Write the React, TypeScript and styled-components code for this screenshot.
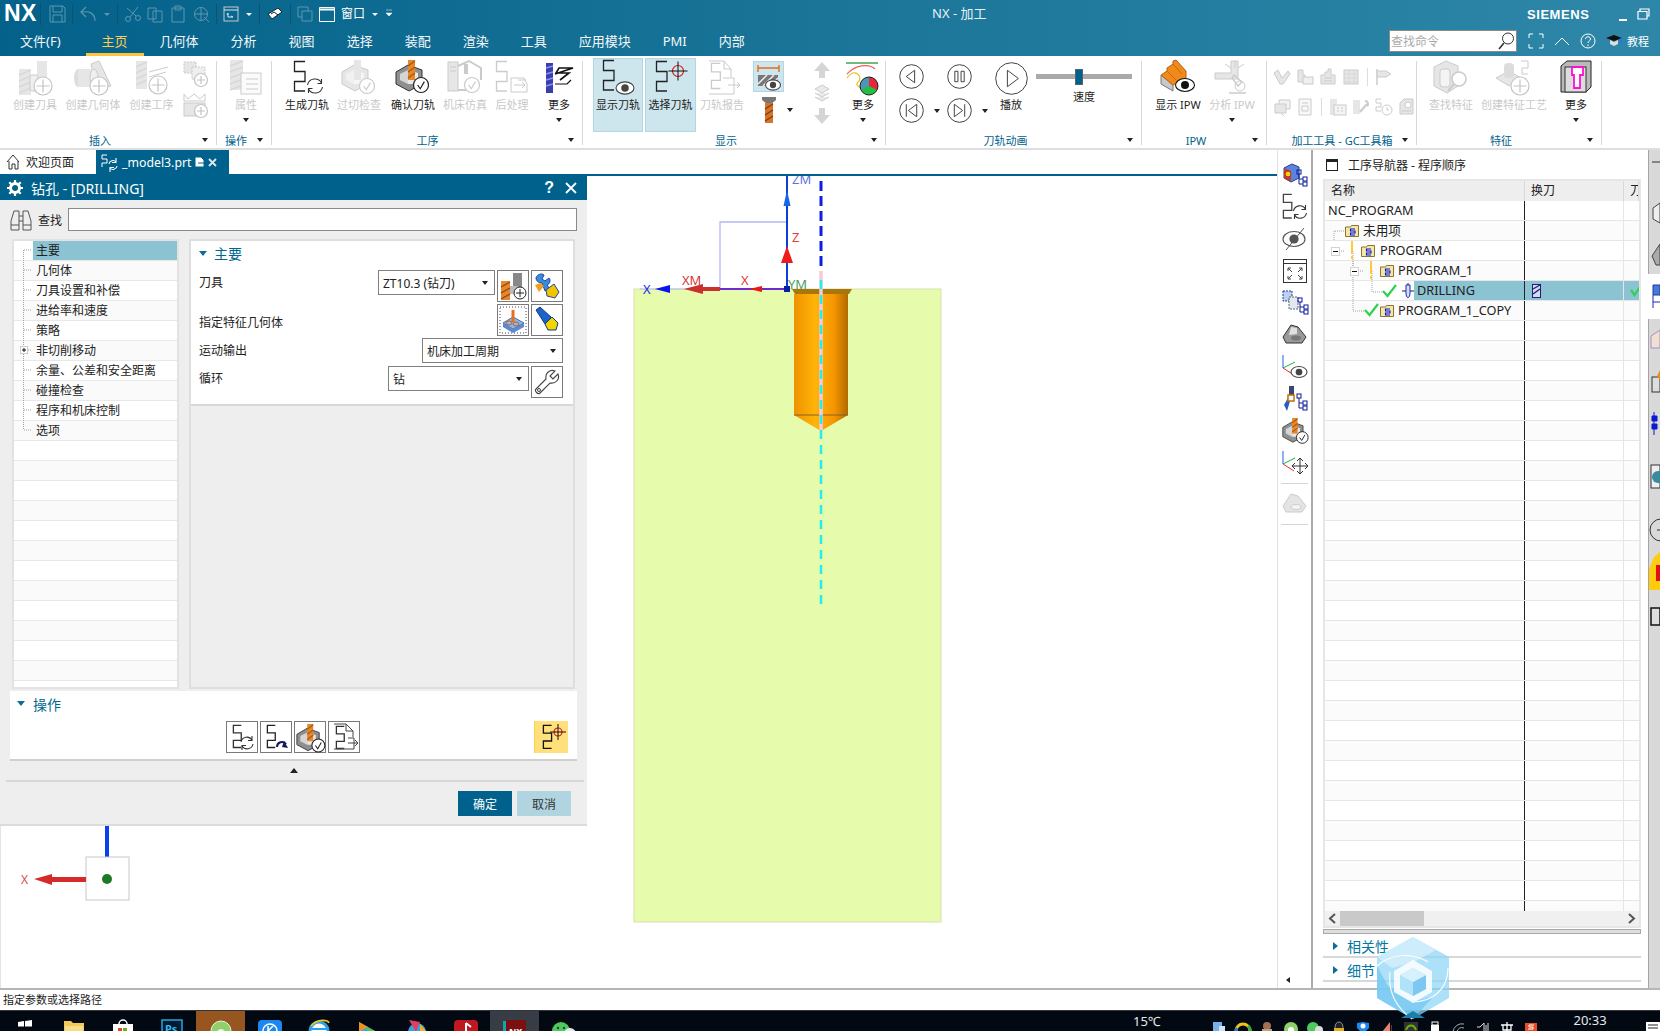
import React from "react";
import styled, { createGlobalStyle } from "styled-components";

const FONT = `"Noto Sans", "Noto Sans CJK SC", sans-serif`;
const BLUE = "#00628c";
const DG = "#cbcbcb";
const DF = "#e6e6e6";

const Global = createGlobalStyle`
  html, body { margin: 0; padding: 0; background: #fff; }
  body { font-family: ${FONT}; font-size: 12px; color: #222; }
  * { box-sizing: border-box; }
`;

const Root = styled.div`
  position: relative;
  width: 1660px;
  height: 1031px;
  overflow: hidden;
  background: #fff;
  display: flex;
  flex-direction: column;
`;

/* ---------- title bar ---------- */
const TitleBar = styled.header`
  height: 56px;
  flex: none;
  background: linear-gradient(90deg, #03618a 0%, #1a7598 50%, #2e87a9 100%);
  color: #fff;
  display: flex;
  flex-direction: column;
`;
const TopRow = styled.div`
  height: 27px;
  display: flex;
  align-items: center;
`;
const Logo = styled.div`
  width: 41px;
  padding-left: 4px;
  font: bold 23px/27px "Liberation Sans", sans-serif;
  letter-spacing: 0.5px;
  border-right: 1px solid #0c4f6e;
  height: 22px;
  display: flex;
  align-items: center;
`;
const Quick = styled.div`
  width: 891px;
  display: flex;
  align-items: center;
  padding-left: 8px;
  gap: 6px;
`;
const QuickSep = styled.span`
  width: 1px;
  height: 20px;
  background: #0d5272;
`;
const QuickText = styled.span`
  font-size: 12px;
  color: #fff;
  margin-top: -2px;
`;
const DocTitle = styled.div`
  font-size: 13px;
  color: #e8f2f6;
  margin-top: -3px;
`;
const Brand = styled.div`
  margin-left: auto;
  font: bold 13px "Liberation Sans", sans-serif;
  letter-spacing: 0.55px;
  width: 91px;
  margin-top: 2px;
`;
const WinBtns = styled.div`
  width: 42px;
  display: flex;
  gap: 9px;
  align-items: center;
`;
const MenuRow = styled.nav`
  height: 29px;
  display: flex;
  align-items: flex-start;
  padding-left: 4px;
`;
const MenuItem = styled.div<{ $active?: boolean; $gap?: number }>`
  padding: 5px 16px 0;
  height: 29px;
  font-size: 13px;
  line-height: 18px;
  margin-right: ${(p) => p.$gap ?? 0}px;
  color: ${(p) => (p.$active ? "#ffcb52" : "#f4f8fa")};
  border-bottom: 3px solid ${(p) => (p.$active ? "#ffc43d" : "transparent")};
`;
const SearchBox = styled.div`
  margin-left: auto;
  margin-top: 3px;
  width: 128px;
  height: 22px;
  background: #fff;
  border: 1px solid #8a8a8a;
  color: #aaa;
  font-size: 12px;
  display: flex;
  align-items: center;
  justify-content: space-between;
  padding: 0 1px 0 1px;
`;
const MenuTools = styled.div`
  width: 143px;
  display: flex;
  align-items: center;
  height: 22px;
  margin-top: 3px;
  padding-left: 11px;
  gap: 10px;
  font-size: 11px;
`;

/* ---------- ribbon ---------- */
const Ribbon = styled.section`
  height: 94px;
  flex: none;
  display: flex;
  background: #fff;
  border-bottom: 2px solid #dedede;
`;
const Group = styled.div<{ $w: number }>`
  width: ${(p) => p.$w}px;
  flex: none;
  height: 92px;
  display: flex;
  flex-direction: column;
  position: relative;
  &::after {
    content: "";
    position: absolute;
    right: 0;
    top: 5px;
    bottom: 3px;
    width: 1px;
    background: #d8d8d8;
  }
`;
const GroupBody = styled.div<{ $pad?: number }>`
  height: 76px;
  display: flex;
  padding-left: ${(p) => p.$pad ?? 0}px;
`;
const GroupFooter = styled.div<{ $shift: number }>`
  height: 16px;
  display: flex;
  align-items: center;
  justify-content: center;
  position: relative;
  color: ${BLUE};
  font-size: 11px;
  line-height: 14px;
  padding: 1px ${(p) => p.$shift}px 0 0;
`;
const FooterCaret = styled.i`
  position: absolute;
  right: 9px;
  top: 6px;
  border: 3.5px solid transparent;
  border-top: 4px solid #222;
  border-bottom: 0;
`;
const Tool = styled.div<{ $w: number; $on?: boolean; $off?: boolean }>`
  width: ${(p) => p.$w}px;
  flex: none;
  display: flex;
  flex-direction: column;
  align-items: center;
  padding-top: ${(p) => (p.$on ? 1 : 4)}px;
  margin-top: ${(p) => (p.$on ? 2 : 0)}px;
  height: ${(p) => (p.$on ? 74 : 76)}px;
  background: ${(p) => (p.$on ? "#cde5ec" : "transparent")};
  border: ${(p) => (p.$on ? "1px solid #b3d7e2" : "none")};
  color: ${(p) => (p.$off ? "#c9c9c9" : "#222")};
  font-size: 11px;
  line-height: 14px;
  white-space: nowrap;
`;
const ToolIcon = styled.div`
  height: 36px;
  display: flex;
  align-items: center;
  justify-content: center;
  margin-bottom: 2px;
`;
const Caret = styled.i<{ $mt?: number }>`
  display: block;
  border: 3.5px solid transparent;
  border-top: 4px solid #222;
  border-bottom: 0;
  margin-top: ${(p) => p.$mt ?? 6}px;
`;
const IconCol = styled.div<{ $w: number }>`
  width: ${(p) => p.$w}px;
  flex: none;
  display: flex;
  flex-direction: column;
  align-items: center;
  gap: 5px;
  padding-top: 5px;
`;
const SmallRow = styled.div<{ $left?: number; $gap?: number }>`
  display: flex;
  align-items: center;
  gap: ${(p) => p.$gap ?? 5}px;
  margin-left: ${(p) => p.$left ?? 0}px;
`;
const SelectedMini = styled.div`
  width: 31px;
  height: 31px;
  background: #cde5ec;
  border: 1px solid #b3d7e2;
  display: flex;
  align-items: center;
  justify-content: center;
`;
const CircleCol = styled.div<{ $w: number }>`
  width: ${(p) => p.$w}px;
  flex: none;
  padding: 8px 0 0 13px;
  display: flex;
  flex-direction: column;
  gap: 9px;
`;
const CircleWrap = styled.div`
  display: flex;
  align-items: center;
  gap: 10px;
`;
const SliderBox = styled.div`
  width: 96px;
  margin-left: 4px;
  flex: none;
  display: flex;
  flex-direction: column;
  align-items: center;
  padding-top: 13px;
  font-size: 11px;
`;
const SliderTrack = styled.div`
  width: 96px;
  height: 5px;
  background: #aaaaaa;
  margin-top: 5px;
  display: flex;
  justify-content: center;
`;
const SliderThumb = styled.div`
  width: 8px;
  height: 16px;
  margin-top: -5.5px;
  margin-left: -10px;
  flex: none;
  background: ${BLUE};
  border: 1px solid #55636b;
`;
const SliderLabel = styled.span`
  margin-top: 11px;
  line-height: 14px;
`;
const ToolsGrid = styled.div`
  display: flex;
  flex-direction: column;
  gap: 12px;
  padding: 12px 0 0 6px;
`;
const GridRow = styled.div`
  display: flex;
  align-items: center;
  gap: 4px;
`;
const ThinSep = styled.span`
  width: 1px;
  height: 18px;
  background: #ddd;
  margin: 0 2px;
`;

/* ---------- main ---------- */
const Main = styled.main`
  height: 838px;
  flex: none;
  display: flex;
`;
const LeftArea = styled.div`
  width: 1277px;
  flex: none;
  display: flex;
  flex-direction: column;
`;
const TabRow = styled.div`
  height: 24px;
  flex: none;
  display: flex;
  background: #fff;
`;
const HomeTab = styled.div`
  width: 96px;
  display: flex;
  align-items: center;
  padding-left: 6px;
  gap: 6px;
  font-size: 12px;
`;
const ActiveTab = styled.div`
  width: 133px;
  background: ${BLUE};
  color: #fff;
  display: flex;
  align-items: center;
  padding-left: 5px;
  gap: 3px;
  font-size: 12.3px;
`;
const Work = styled.div`
  height: 814px;
  display: flex;
`;
const DialogCol = styled.div`
  width: 587px;
  flex: none;
  display: flex;
  flex-direction: column;
  border-left: 1px solid #e4e4e4;
`;
const Dialog = styled.div`
  height: 652px;
  margin-left: -1px;
  flex: none;
  display: flex;
  flex-direction: column;
  background: #eeeeee;
  border-bottom: 2px solid #dcdcdc;
`;
const DialogTitle = styled.div`
  height: 26px;
  flex: none;
  background: ${BLUE};
  color: #fff;
  display: flex;
  align-items: center;
  padding: 1px 10px 0 7px;
  font-size: 14px;
  gap: 8px;
`;
const TitleActions = styled.div`
  margin-left: auto;
  display: flex;
  align-items: center;
  gap: 11px;
  font: bold 16px "Liberation Sans", sans-serif;
`;
const FindRow = styled.div`
  height: 23px;
  margin-top: 8px;
  display: flex;
  align-items: center;
  padding: 0 10px;
  font-size: 12px;
  flex: none;
`;
const FindLabel = styled.span`
  margin: 0 6px 0 6px;
  white-space: nowrap;
  flex: none;
`;
const FindInput = styled.div`
  width: 509px;
  height: 23px;
  flex: none;
  background: #fff;
  border: 1px solid #8a8a8a;
`;
const Columns = styled.div`
  display: flex;
  height: 450px;
  margin-top: 8px;
  padding-left: 12px;
  gap: 10px;
  flex: none;
`;
const TreePanel = styled.div`
  position: relative;
  width: 167px;
  flex: none;
  background: #fff;
  border: 2px solid #e2e2e2;
  overflow: hidden;
`;
const TreeRow = styled.div<{ $alt: boolean }>`
  height: 20px;
  border-bottom: 1px solid #e8e8e8;
  background: ${(p) => (p.$alt ? "#fafafa" : "#fff")};
  padding-left: 19px;
  line-height: 19px;
  font-size: 12px;
  color: #222;
  position: relative;
`;
const TreeLabel = styled.span<{ $sel?: boolean }>`
  display: block;
  height: 19px;
  padding-left: 3px;
  background: ${(p) => (p.$sel ? "#8bc3d3" : "transparent")};
`;
const TreeLines = styled.svg`
  position: absolute;
  left: 0;
  top: 0;
`;
const FormPanel = styled.div`
  width: 386px;
  flex: none;
  border: 2px solid #dedede;
  background: #eeeeee;
`;
const FormSection = styled.div`
  height: 165px;
  background: #fff;
  border-bottom: 2px solid #d8d8d8;
  padding: 0 10px 0 6px;
`;
const SectionHead = styled.div`
  height: 29px;
  display: flex;
  align-items: center;
  gap: 7px;
  color: #00688f;
  font-size: 14px;
  padding: 0 0 5px 2px;
`;
const DownTri = styled.i`
  border: 4.5px solid transparent;
  border-top: 5px solid #0c6e96;
  border-bottom: 0;
`;
const FormRow = styled.div`
  display: flex;
  align-items: flex-start;
  margin-bottom: 2px;
  min-height: 25px;
`;
const FieldLabel = styled.span<{ $drop?: number }>`
  line-height: 26px;
  margin-top: ${(p) => p.$drop ?? 0}px;
  font-size: 12px;
  padding-left: 2px;
`;
const Controls = styled.div`
  margin-left: auto;
  display: flex;
  gap: 2px;
`;
const Combo = styled.div<{ $w: number }>`
  width: ${(p) => p.$w}px;
  height: 25px;
  background: #fff;
  border: 1px solid #808080;
  display: flex;
  align-items: center;
  justify-content: space-between;
  padding: 0 6px 0 4px;
  font-size: 12px;
`;
const ComboCaret = styled.i`
  border: 3.5px solid transparent;
  border-top: 4px solid #222;
  border-bottom: 0;
`;
const IconBtn = styled.div`
  width: 32px;
  height: 32px;
  flex: none;
  background: #fff;
  border: 1px solid #7a7a7a;
  display: flex;
  align-items: center;
  justify-content: center;
`;
const OpsPanel = styled.div`
  height: 70px;
  margin: 2px 10px 0 10px;
  flex: none;
  background: #fff;
  border-bottom: 2px solid #cfcfcf;
`;
const OpsHead = styled.div`
  height: 30px;
  display: flex;
  align-items: center;
  gap: 8px;
  padding: 0 0 5px 7px;
  color: #00688f;
  font-size: 14px;
`;
const OpsButtons = styled.div`
  display: flex;
  gap: 2px;
  padding-left: 216px;
  padding-right: 9px;
`;
const YellowBtn = styled.div`
  margin-left: auto;
  width: 34px;
  height: 32px;
  background: #ffe07a;
  border-left: 1px solid #ffd040;
  display: flex;
  align-items: center;
  justify-content: center;
`;
const CollapseBar = styled.div`
  height: 21px;
  margin: 0 3px 0 6px;
  display: flex;
  justify-content: center;
  align-items: center;
  border-bottom: 2px solid #d8d8d8;
`;
const UpTri = styled.i`
  border: 4.5px solid transparent;
  border-bottom: 5px solid #222;
  border-top: 0;
  margin-left: -3px;
`;
const DialogFooter = styled.div`
  display: flex;
  justify-content: flex-end;
  gap: 5px;
  padding: 9px 16px 0 0;
`;
const DlgButton = styled.div<{ $primary?: boolean }>`
  width: 54px;
  height: 25px;
  display: flex;
  align-items: center;
  justify-content: center;
  font-size: 12px;
  background: ${(p) => (p.$primary ? BLUE : "#b0d5e0")};
  color: ${(p) => (p.$primary ? "#fff" : "#333")};
`;
const TriadBox = styled.svg`
  display: block;
  font-family: "Noto Sans", sans-serif;
`;
const Viewport = styled.svg`
  flex: 1;
  display: block;
  height: 814px;
  border-top: 2px solid ${BLUE};
  background: #fff;
  font-family: "Noto Sans", sans-serif;
`;

/* ---------- side columns ---------- */
const ToolColumn = styled.aside`
  width: 36px;
  flex: none;
  display: flex;
  flex-direction: column;
  align-items: center;
  padding-top: 9px;
  border-left: 1px solid #e2e2e2;
  border-right: 2px solid #ababab;
`;
const ColItem = styled.div`
  width: 32px;
  height: 32px;
  flex: none;
  display: flex;
  align-items: center;
  justify-content: center;
`;
const ColSep = styled.hr`
  width: 27px;
  height: 1px;
  margin: 4px 0;
  flex: none;
  border: 0;
  background: #d5d5d5;
`;
const ColCaret = styled.i`
  margin-top: auto;
  margin-bottom: 5px;
  margin-right: 14px;
  border: 3.5px solid transparent;
  border-right: 4px solid #222;
  border-left: 0;
`;
const Navigator = styled.section`
  width: 335px;
  flex: none;
  display: flex;
  flex-direction: column;
  padding-left: 10px;
  padding-right: 7px;
`;
const NavHead = styled.div`
  height: 29px;
  display: flex;
  align-items: center;
  gap: 10px;
  padding-left: 3px;
  font-size: 12px;
  padding-top: 1px;
`;
const NavWinIcon = styled.i`
  width: 12px;
  height: 12px;
  border: 1px solid #222;
  border-top-width: 3px;
`;
const TableBox = styled.div`
  height: 749px;
  flex: none;
  border: 2px solid #e6e6e6;
  display: flex;
  flex-direction: column;
`;
const HeaderRow = styled.div`
  height: 20px;
  flex: none;
  display: grid;
  grid-template-columns: 200px 99px 1fr;
  background: #eeeeee;
  line-height: 20px;
  overflow: hidden;
`;
const HeaderCell = styled.div`
  padding-left: 6px;
  border-right: 1px solid #d8d8d8;
  white-space: nowrap;
  overflow: hidden;
`;
const Rows = styled.div`
  height: 710px;
  flex: none;
  overflow: hidden;
`;
const NavRow = styled.div<{ $alt: boolean }>`
  height: 20px;
  display: grid;
  grid-template-columns: 200px 99px 1fr;
  border-bottom: 1px solid #e6e6e6;
  background: ${(p) => (p.$alt ? "#fbfbfb" : "#fff")};
`;
const NameCell = styled.div`
  border-right: 1px solid #222;
  display: flex;
  align-items: stretch;
  line-height: 19px;
  white-space: nowrap;
  font-size: 12.7px;
`;
const NameText = styled.span<{ $sel?: boolean }>`
  flex: ${(p) => (p.$sel ? 1 : "none")};
  padding-left: 3px;
  background: ${(p) => (p.$sel ? "#8bc3d3" : "transparent")};
`;
const DataCell = styled.div<{ $sel?: boolean; $line?: boolean }>`
  background: ${(p) => (p.$sel ? "#8bc3d3" : "transparent")};
  border-right: ${(p) => (p.$line ? "1px solid #e6e6e6" : "0")};
  display: flex;
  align-items: center;
  padding-left: 7px;
  overflow: hidden;
`;
const Glyphs = styled.svg`
  flex: none;
  overflow: visible;
  display: block;
`;
const ScrollBar = styled.div`
  height: 15px;
  flex: none;
  background: #f0f0f0;
  display: flex;
  align-items: center;
  justify-content: space-between;
  padding: 0 3px;
`;
const ScrollThumb = styled.div`
  width: 84px;
  height: 15px;
  background: #c9c9c9;
  margin-left: 3px;
  margin-right: auto;
`;
const NavSplit = styled.div`
  height: 5px;
  margin-top: 1px;
  flex: none;
  background: #dedede;
  border: 1px solid #a8a8a8;
`;
const FoldRow = styled.div`
  height: 24px;
  flex: none;
  display: flex;
  align-items: center;
  gap: 9px;
  padding-left: 10px;
  color: #00789f;
  font-size: 14px;
  border-bottom: 2px solid #d8d8d8;
  padding-top: 2px;
`;
const RightTri = styled.i`
  border: 4.5px solid transparent;
  border-left: 5px solid #0c6e96;
  border-right: 0;
`;
const Rail = styled.aside`
  width: 12px;
  flex: none;
  display: flex;
  flex-direction: column;
  overflow: hidden;
`;
const RailGroup = styled.svg<{ $h: number; $grey: boolean }>`
  display: block;
  flex: none;
  height: ${(p) => p.$h}px;
  width: 12px;
  background: ${(p) => (p.$grey ? "#d9d9d9" : "#fff")};
`;

/* ---------- bottom ---------- */
const StatusBar = styled.footer`
  height: 22px;
  flex: none;
  border-top: 2px solid #b5b5b5;
  padding-left: 3px;
  font-size: 11px;
  line-height: 20px;
  background: #fff;
  color: #222;
`;
const Taskbar = styled.div`
  height: 21px;
  flex: none;
  background: #020913;
  border-top: 1px solid #33373d;
  display: flex;
  overflow: hidden;
  color: #e8e8e8;
`;
const TaskItem = styled.div<{ $bg?: string }>`
  width: 49px;
  flex: none;
  background: ${(p) => p.$bg ?? "transparent"};
  display: flex;
  justify-content: center;
  padding-top: 9px;
`;
const Temp = styled.div`
  margin-left: 545px;
  width: 74px;
  padding-top: 2px;
  font-size: 13px;
  line-height: 16px;
`;
const TrayIcon = styled.div`
  width: 24px;
  flex: none;
  padding-top: 11px;
  display: flex;
  justify-content: center;
`;
const Clock = styled.div`
  margin-left: 31px;
  width: 73px;
  padding-top: 1px;
  font-size: 13px;
  line-height: 16px;
`;
const NotifyIcon = styled.div`
  padding-top: 11px;
`;
const Watermark = styled.svg`
  position: absolute;
  left: 1376px;
  top: 936px;
  pointer-events: none;
`;

/* ---------- icon parts ---------- */
type SvgP = { w?: number; h?: number; children?: React.ReactNode };
const Ic = styled.svg`
  display: block;
  overflow: visible;
  flex: none;
`;
const S = ({ w = 36, h = 36, children }: SvgP) => (
  <Ic width={w} height={h} viewBox={`0 0 ${w} ${h}`}>
    {children}
  </Ic>
);
const Path5 = ({ x = 0, y = 0, k = 1, c = "#222", sw = 1.3 }: { x?: number; y?: number; k?: number; c?: string; sw?: number }) => (
  <path
    transform={`translate(${x} ${y}) scale(${k})`}
    d="M11 .5H.5V10.5H11V20.5H.5V30H11"
    fill="none"
    stroke={c}
    strokeWidth={sw / k}
  />
);
const Refresh = ({ cx, cy, r = 7, c = "#333" }: { cx: number; cy: number; r?: number; c?: string }) => (
  <g fill="none" stroke={c} strokeWidth="1.1">
    <path d={`M${cx - r} ${cy - 1}A${r} ${r} 0 0 1 ${cx + r - 1} ${cy - 3}`} />
    <path d={`M${cx + r} ${cy + 1}A${r} ${r} 0 0 1 ${cx - r + 1} ${cy + 3}`} />
    <path d={`M${cx + r - 1} ${cy - 7}V${cy - 2.5}H${cx + r - 5}M${cx - r + 1} ${cy + 7}V${cy + 2.5}H${cx - r + 5}`} />
  </g>
);
const Eye = ({ cx, cy, rx = 9, c = "#444" }: { cx: number; cy: number; rx?: number; c?: string }) => (
  <g>
    <ellipse cx={cx} cy={cy} rx={rx} ry={rx * 0.68} fill="#fff" stroke={c} strokeWidth="1.1" />
    <circle cx={cx} cy={cy} r={rx * 0.42} fill={c} />
  </g>
);
const Plus = ({ cx, cy, r = 8 }: { cx: number; cy: number; r?: number }) => (
  <g>
    <circle cx={cx} cy={cy} r={r} fill="#fff" stroke="#c4c4c4" strokeWidth="1.2" />
    <path d={`M${cx - r + 2.5} ${cy}H${cx + r - 2.5}M${cx} ${cy - r + 2.5}V${cy + r - 2.5}`} stroke="#c4c4c4" strokeWidth="1.2" />
  </g>
);
const Check = ({ cx, cy, r = 7, c = "#333" }: { cx: number; cy: number; r?: number; c?: string }) => (
  <g>
    <circle cx={cx} cy={cy} r={r} fill="#fff" stroke={c} strokeWidth="1.2" />
    <path d={`M${cx - r * 0.45} ${cy}l${r * 0.35} ${r * 0.5}l${r * 0.55} -${r * 0.95}`} fill="none" stroke={c} strokeWidth="1.2" />
  </g>
);
const Stripe = ({ x, y, w, h, f = DF, l = "#d8d8d8" }: { x: number; y: number; w: number; h: number; f?: string; l?: string }) => (
  <g>
    <rect x={x} y={y} width={w} height={h} fill={f} />
    <path
      d={Array.from({ length: Math.floor(h / 6) })
        .map((_, i) => `M${x} ${y + 6 + i * 6}L${x + w} ${y + 1 + i * 6}`)
        .join("")}
      stroke={l}
      strokeWidth="1.4"
    />
  </g>
);
const Block3D = ({ gray = false }: { gray?: boolean }) => (
  <g>
    <path d="M1 12L13 5L27 10V24L14 31L1 24Z" fill={gray ? DF : "#8f8f8f"} stroke={gray ? DG : "#333"} />
    <path d="M5 14L13 10V24L5 20Z" fill={gray ? "#f1f1f1" : "#d5d5d5"} />
    <path d="M13 10L23 13V24L13 24Z" fill={gray ? "#f5f5f5" : "#e8e8e8"} />
  </g>
);
const ConfirmIcon = ({ k = 1 }: { k?: number }) => (
  <g transform={`scale(${k})`}>
    <Block3D />
    <Stripe x={13} y={0} w={7} h={20} f="#e8862a" l="#a65a12" />
    <Check cx={26} cy={25} r={7.5} c="#222" />
  </g>
);
const FolderG = ({ x, y }: { x: number; y: number }) => (
  <g transform={`translate(${x} ${y})`}>
    <path d="M.5 3V12.5H13.5V1.5H6.5L5.5 3Z" fill="#f7e6a4" stroke="#8a7434" />
    <path d="M10 5H5.5V7H10V9H5.5V11H10" fill="none" stroke="#0014e0" strokeWidth="1.1" />
  </g>
);
const Tick = ({ x, y }: { x: number; y: number }) => (
  <path transform={`translate(${x} ${y})`} d="M0 6L4.5 11L13 0" fill="none" stroke="#2fd24e" strokeWidth="2.2" />
);
const Dots = ({ d }: { d: string }) => <path d={d} fill="none" stroke="#a2a2a2" strokeDasharray="1 1" />;
const MinusBox = ({ x, y }: { x: number; y: number }) => (
  <g transform={`translate(${x} ${y})`}>
    <rect x=".5" y=".5" width="8" height="8" fill="#fff" stroke="#d2d2d2" />
    <path d="M2 4.5H7" stroke="#111" />
  </g>
);
const Excl = ({ x }: { x: number }) => (
  <path d={`M${x} 0V13M${x} 15V18`} stroke="#ffc93c" strokeWidth="2" />
);

/* ribbon icons */
const CreateTool = () => (
  <S>
    <Stripe x={2} y={9} w={12} h={26} />
    <rect x="20" y="1" width="10" height="21" fill={DF} />
    <rect x="13" y="15" width="8" height="16" rx="2" fill="#efefef" stroke={DG} />
    <Plus cx={26} cy={26} r={9} />
  </S>
);
const CreateGeom = () => (
  <S w={40}>
    <path d="M18 4L26 1L38 26L24 30Z" fill={DF} stroke={DG} />
    <ellipse cx="5" cy="18" rx="4" ry="9" fill="#ddd" />
    <rect x="5" y="9" width="16" height="18" fill={DF} />
    <ellipse cx="21" cy="18" rx="4" ry="9" fill="#efefef" stroke={DG} />
    <Plus cx={26} cy={26} r={9} />
  </S>
);
const CreateOp = () => (
  <S>
    <Stripe x={2} y={1} w={11} h={28} />
    <path d="M15 12L34 7M15 17L32 12M15 22L30 20" stroke={DG} fill="none" />
    <Plus cx={24} cy={25} r={9} />
  </S>
);
const SmallPaper = () => (
  <S w={24} h={26}>
    <rect x="1" y="1" width="12" height="11" fill={DF} stroke={DG} strokeDasharray="2 1" />
    <rect x="9" y="6" width="13" height="12" fill="#efefef" stroke={DG} strokeDasharray="2 1" />
    <Plus cx={18} cy={19} r={6.5} />
  </S>
);
const SmallCrown = () => (
  <S w={24} h={26}>
    <path d="M1 2L5 7L11 2L17 7L22 2V9H1Z" fill="none" stroke={DG} />
    <rect x="1" y="11" width="21" height="13" fill={DF} stroke={DG} />
    <Plus cx={18} cy={19} r={6.5} />
  </S>
);
const PropsIcon = () => (
  <S>
    <Stripe x={2} y={0} w={13} h={30} />
    <rect x="13" y="13" width="20" height="21" fill="#fbfbfb" stroke={DG} />
    <path d="M18 19H30M18 24H30M18 29H30" stroke={DG} />
  </S>
);
const GenPath = () => (
  <S>
    <Path5 x={5} y={1} k={1} c="#222" />
    <Refresh cx={26} cy={26} r={7.5} />
  </S>
);
const Overcut = () => (
  <S>
    <Block3D gray />
    <rect x="13" y="0" width="7" height="20" fill={DF} />
    <Check cx={26} cy={26} r={7.5} c={DG} />
  </S>
);
const MachineSim = () => (
  <S>
    <rect x="1" y="2" width="10" height="29" fill={DF} stroke={DG} />
    <path d="M3 7H9M3 11H9" stroke={DG} />
    <path d="M11 6L22 1L34 8V20" fill="none" stroke={DG} strokeWidth="2" />
    <rect x="17" y="4" width="4" height="10" fill={DG} />
    <path d="M11 30H30" stroke={DG} strokeWidth="2" />
    <Check cx={25} cy={25} r={7.5} c={DG} />
  </S>
);
const PostProc = () => (
  <S>
    <Path5 x={2} y={1} c={DG} />
    <path d="M17 18H30L33 24V32H17ZM24 20H32" fill="none" stroke={DG} />
    <path d="M20 25H31M28 22L31 25L28 28" fill="none" stroke={DG} />
  </S>
);
const MoreOp = () => (
  <S>
    <rect x="5" y="3" width="7" height="30" fill="#3a3fb0" />
    <path d="M5 8L12 6M5 14L12 12M5 20L12 18M5 26L12 24" stroke="#8a90ee" strokeWidth="1.5" />
    <path d="M14 14L32 8H18L15 13H28L19 20" fill="none" stroke="#111" strokeWidth="1.6" />
    <path d="M14 24H26L30 20" fill="none" stroke="#111" strokeWidth="1.2" />
  </S>
);
const ShowPath = () => (
  <S>
    <Path5 x={3} y={0} />
    <Eye cx={25} cy={28} rx={9} />
  </S>
);
const Target = ({ cx, cy, r = 5 }: { cx: number; cy: number; r?: number }) => (
  <g>
    <circle cx={cx} cy={cy} r={r} fill="none" stroke="#d81a1a" strokeWidth="1.2" />
    <path d={`M${cx - r - 4} ${cy}H${cx + r + 4}M${cx} ${cy - r - 4}V${cy + r + 4}`} stroke="#111" />
  </g>
);
const SelectPath = () => (
  <S>
    <Path5 x={3} y={1} />
    <Target cx={25} cy={11} r={5.5} />
  </S>
);
const PathReport = () => (
  <S>
    <path d="M5 1H20L27 9V17" fill="none" stroke={DG} />
    <path d="M27 9H20V1" fill="none" stroke={DG} />
    <Path5 x={7} y={3} k={0.85} c={DG} />
    <path d="M19 18H30V34H5M24 25H36M33 22L36 25L33 28" fill="none" stroke={DG} />
  </S>
);
const ShowCut = () => (
  <S w={29} h={29}>
    <rect x="4" y="13" width="20" height="11" fill="#777" />
    <path d="M4 22L13 13M9 24L20 13M16 24L24 16" stroke="#eee" strokeWidth="1.5" />
    <path d="M4 6H25M4 3V10M25 3V10" fill="none" stroke="#e0701a" strokeWidth="1.4" />
    <Eye cx={19} cy={23} rx={7.5} />
  </S>
);
const DrillSmall = () => (
  <S w={18} h={26}>
    <path d="M2 0H16V3L11 7H7L2 3Z" fill="#777" />
    <Stripe x={5} y={6} w={8} h={20} f="#d8742a" l="#7c3f10" />
  </S>
);
const ArrowBlock = ({ up, c = "#d5d5d5" }: { up: boolean; c?: string }) => (
  <S w={18} h={18}>
    <path d={up ? "M9 1L17 10H12V17H6V10H1Z" : "M6 1H12V8H17L9 17L1 8H6Z"} fill={c} />
  </S>
);
const Layers = () => (
  <S w={18} h={18}>
    <path d="M9 1L16 5L9 9L2 5ZM2 9L9 13L16 9M2 13L9 17L16 13" fill="#eaeaea" stroke={DG} />
  </S>
);
const MorePie = () => (
  <S>
    <path d="M1 3H33" stroke="#109020" strokeWidth="1.2" />
    <path d="M2 18C10 6 19 18 13 22C9 26 17 28 18 30" fill="none" stroke="#f0c020" strokeWidth="1.2" />
    <path d="M2 14C10 5 24 3 30 9" fill="none" stroke="#f06060" strokeWidth="1.2" />
    <circle cx="24" cy="26" r="9" fill="#20c040" />
    <path d="M24 26V17A9 9 0 0 1 32 30Z" fill="#e8283a" />
    <path d="M24 26V17A9 9 0 0 0 16 30Z" fill="#4a98b8" />
    <circle cx="24" cy="26" r="9" fill="none" stroke="#222" />
  </S>
);
const Round = ({ kind, size = 25 }: { kind: string; size?: number }) => {
  const c = size / 2;
  const u = size / 24;
  return (
    <S w={size} h={size}>
      <circle cx={c} cy={c} r={c - 0.7} fill="none" stroke="#444" strokeWidth="1" />
      <g transform={`scale(${u})`} fill="none" stroke="#444" strokeWidth={1 / u}>
        {kind === "back" && <path d="M15 6L7 12L15 18Z" />}
        {kind === "play" && <path d="M9 6L17 12L9 18Z" />}
        {kind === "pause" && <path d="M7.5 7H10.5V17H7.5ZM13.5 7H16.5V17H13.5Z" />}
        {kind === "prev" && <path d="M7 6V18M17 6L9 12L17 18Z" />}
        {kind === "next" && <path d="M17 6V18M7 6L15 12L7 18Z" />}
      </g>
    </S>
  );
};
const ShowIPW = () => (
  <S>
    <path d="M1 15L13 25V31L1 24Z" fill="#c8c8c8" stroke="#777" />
    <path d="M1 15L7 11V8L13 4V1L16 0L26 11V18L13 25Z" fill="#f08a1c" stroke="#b86010" />
    <path d="M7 11L16 20M13 4L22 14" stroke="#c86a10" />
    <Eye cx={25} cy={25} rx={9.5} c="#111" />
  </S>
);
const AnalyzeIPW = () => (
  <S>
    <path d="M1 13H17V1H24V19H1Z" fill={DF} stroke={DG} />
    <path d="M11 4L17 8M30 4L24 8M21 1V8" stroke={DG} />
    <path d="M20 15L28 22L24 26L18 18ZM15 33H32" fill="none" stroke={DG} strokeWidth="1.4" />
    <circle cx="26" cy="26" r="5" fill="none" stroke={DG} />
  </S>
);
const tinyShapes: React.ReactNode[] = [
  <path key="0" d="M1 5L5 2L9 10L15 3L17 6L10 16H7Z" fill={DF} stroke={DG} />,
  <g key="1"><path d="M2 2H7V7H9V14H2Z" fill={DF} stroke={DG} /><rect x="7" y="9" width="10" height="7" fill="#efefef" stroke={DG} /></g>,
  <g key="2"><path d="M2 7H6V4H9V1H12V7H16V16H2Z" fill={DF} stroke={DG} /><path d="M5 10H13M5 13H13" stroke={DG} /></g>,
  <g key="3"><rect x="2" y="2" width="14" height="14" fill={DF} stroke={DG} /><path d="M2 6H16M2 10H16M2 14H16M7 2V16M12 2V16" stroke="#d8d8d8" /></g>,
  <g key="4"><path d="M3 1V17" stroke={DG} strokeWidth="1.5" /><path d="M3 3H12L17 6L12 9H3Z" fill={DF} stroke={DG} /></g>,
  <g key="5"><path d="M6 2H17V11H6Z" fill="#f2f2f2" stroke={DG} /><path d="M2 6H13V15H2Z" fill={DF} stroke={DG} /><path d="M8 15L11 18" stroke={DG} /></g>,
  <g key="6"><path d="M3 1H15V17H3Z" fill="#f8f8f8" stroke={DG} /><path d="M6 5H12M6 8H12V13H6Z" fill="none" stroke={DG} /></g>,
  <g key="7"><rect x="2" y="1" width="7" height="16" fill={DF} /><rect x="6" y="7" width="12" height="10" fill="#f4f4f4" stroke={DG} /><path d="M9 10H11M13 10H15M9 13H11M13 13H15" stroke={DG} /></g>,
  <g key="8"><rect x="2" y="2" width="7" height="14" fill={DF} /><path d="M9 14L16 6M14 3C17 3 18 6 16 8" fill="none" stroke={DG} strokeWidth="2" /></g>,
  <g key="9"><path d="M7 1H2V5H7V9H2V13H7" fill="none" stroke={DG} /><circle cx="13" cy="12" r="5" fill="#fff" stroke={DG} /><path d="M13 9V12H15" fill="none" stroke={DG} /></g>,
  <g key="10"><path d="M7 1H16V16H3V5Z" fill={DF} stroke={DG} /><circle cx="11" cy="7" r="3" fill="#fff" stroke={DG} /><path d="M5 13H14" stroke={DG} /></g>,
];
const Tiny = ({ n }: { n: number }) => <S w={19} h={18}>{tinyShapes[n]}</S>;
const FindFeature = () => (
  <S>
    <path d="M1 7L13 1L25 6V26L14 33L1 26Z" fill={DF} stroke={DG} />
    <rect x="7" y="9" width="10" height="18" rx="3" fill="#f4f4f4" stroke={DG} />
    <circle cx="26" cy="19" r="7" fill="#fff" stroke={DG} strokeWidth="1.6" />
    <path d="M21 24L15 31" stroke={DG} strokeWidth="2" />
  </S>
);
const CreateFeature = () => (
  <S w={38}>
    <path d="M1 18L14 11L26 18L14 26Z" fill={DF} stroke={DG} />
    <path d="M9 6A5 3 0 0 1 19 6V15A5 3 0 0 1 9 15Z" fill="#dcdcdc" />
    <path d="M26 1H33V8H27V14H33" fill="none" stroke={DG} />
    <Plus cx={25} cy={26} r={9} />
  </S>
);
const MoreFeature = () => (
  <S>
    <path d="M3 6L9 1H33V27L28 32H3Z" fill="#b9b9b9" stroke="#222" />
    <rect x="7" y="7" width="21" height="25" fill="#ddd" stroke="#333" />
    <path d="M14 7H25V15H22V28H16V15H14Z" fill="#fff" stroke="#ff10d8" strokeWidth="1.8" />
  </S>
);

/* dialog icons */
const Binoculars = () => (
  <S w={22} h={24}>
    <path d="M4 3H9V22H1V13ZM13 3H18L21 13V22H13ZM9 8H13M9 13H13" fill="none" stroke="#555" />
    <path d="M1 17H9M13 17H21" stroke="#555" />
  </S>
);
const GearIcon = () => (
  <S w={16} h={16}>
    <circle cx="8" cy="8" r="4.5" fill="none" stroke="#fff" strokeWidth="3" />
    <path d="M8 0V3M8 13V16M0 8H3M13 8H16M2.3 2.3L4.4 4.4M11.6 11.6L13.7 13.7M2.3 13.7L4.4 11.6M11.6 4.4L13.7 2.3" stroke="#fff" strokeWidth="2.2" />
  </S>
);
const BtnCreate = () => (
  <S w={28} h={28}>
    <Stripe x={2} y={9} w={9} h={19} f="#e8862a" l="#8a4a14" />
    <rect x="14" y="1" width="9" height="14" fill="#888" />
    <rect x="11" y="14" width="8" height="8" fill="#bbb" />
    <circle cx="21" cy="21" r="6" fill="#fff" stroke="#222" />
    <path d="M17 21H25M21 17V25" stroke="#222" />
  </S>
);
const BtnWrenchTorch = () => (
  <S w={28} h={28}>
    <path d="M3 6C4 2 9 1 11 3L9 7L12 9L16 6C18 8 17 12 14 13L17 17L12 19L9 11C6 11 3 9 3 6Z" fill="#3a8ae0" stroke="#1b4d9a" />
    <path d="M13 18L21 12L26 20L22 26L14 24Z" fill="#f2c400" stroke="#1b4d9a" />
    <path d="M2 13L7 11L11 14L6 20Z" fill="#f0a020" />
  </S>
);
const BtnFeature = () => (
  <S w={28} h={28}>
    <rect x="1" y="1" width="26" height="26" fill="none" stroke="#444" strokeDasharray="1 2" />
    <path d="M4 17L14 11L25 17L14 23Z" fill="#8fb8ea" stroke="#4070b0" />
    <path d="M4 17V21L14 27L25 21V17L14 23Z" fill="#5c8ad0" />
    <rect x="12.5" y="4" width="3" height="12" fill="#e8701a" />
    <ellipse cx="10" cy="17" rx="3" ry="2" fill="none" stroke="#c06020" />
    <ellipse cx="17" cy="18" rx="3" ry="2" fill="none" stroke="#c06020" />
  </S>
);
const BtnTorch = () => (
  <S w={28} h={28}>
    <path d="M3 4L7 1L19 12L12 18Z" fill="#1e62c8" stroke="#0a3a8a" />
    <path d="M12 18L19 11L25 17L23 24L15 24Z" fill="#f2d400" stroke="#0a3a8a" />
  </S>
);
const Wrench = () => (
  <S w={28} h={28}>
    <path d="M25 6L20 11L17 8L22 3C17 1 12 5 13 11L3 21C1 23 5 27 7 25L17 15C23 16 27 11 25 6Z" fill="#fff" stroke="#444" strokeWidth="1.1" />
    <circle cx="6" cy="22" r="1.5" fill="none" stroke="#444" />
  </S>
);
const OpPost = () => (
  <S w={28} h={28}>
    <path d="M4 1H16L23 8V14M16 1V8H23" fill="none" stroke="#444" />
    <Path5 x={6} y={3} k={0.75} c="#333" />
    <path d="M18 15H24V26H4M18 20H28M25 17L28 20L25 23" fill="none" stroke="#444" />
  </S>
);
const OpVerify = () => (
  <S w={28} h={28}>
    <Path5 x={5} y={2} k={0.75} />
    <path d="M15 24A5 5 0 0 1 24 21" fill="none" stroke="#141a60" strokeWidth="2" />
    <path d="M22 18L26 25L20 24Z" fill="#141a60" />
  </S>
);

/* left column icons */
const Cube = () => (
  <g>
    <path d="M2 5L10 1L17 4V15L9 19L2 15Z" fill="#5b84e0" stroke="#27408f" />
    <path d="M2 5L9 8V19L2 15Z" fill="#c03a3a" />
    <circle cx="6" cy="11" r="3" fill="#f2d400" stroke="#c02020" />
  </g>
);
const BranchTree = ({ x, y }: { x: number; y: number }) => (
  <g transform={`translate(${x} ${y})`} fill="none" stroke="#0a1a9a">
    <rect x="0" y="0" width="4" height="4" />
    <path d="M2 4V14H6M2 9H6" />
    <rect x="6" y="7" width="4" height="4" />
    <rect x="6" y="12" width="4" height="4" />
  </g>
);
const ColIcons: React.ReactNode[] = [
  <S w={26} h={24} key="a"><Cube /><BranchTree x={15} y={7} /></S>,
  <S w={26} h={26} key="b"><Path5 x={1} y={0} k={0.8} c="#444" /><Refresh cx={18} cy={18} r={6.5} /></S>,
  <S w={26} h={24} key="c"><Eye cx={12} cy={12} rx={11} c="#555" /><path d="M22 1L4 23" stroke="#555" /></S>,
  <S w={24} h={24} key="d"><rect x=".5" y=".5" width="23" height="23" fill="none" stroke="#333" /><path d="M0 4.5H23" stroke="#333" /><path d="M5 9L9 13M5 9V12M5 9H8M19 9L15 13M19 9V12M19 9H16M5 20L9 16M5 20V17M5 20H8M19 20L15 16M19 20V17M19 20H16" stroke="#444" fill="none" /></S>,
  <S w={26} h={26} key="e"><rect x="1" y="1" width="9" height="10" fill="#bcd0f0" stroke="#1a3aa0" strokeDasharray="2 1" /><rect x="7" y="7" width="9" height="12" fill="#e2e8f0" stroke="#666" strokeDasharray="2 1" /><BranchTree x={16} y={8} /></S>,
  <S w={26} h={24} key="f"><path d="M1 14L9 2L16 4L24 14L20 20H4Z" fill="#999" stroke="#333" /><path d="M9 4L15 5L15 11L7 12Z" fill="#e0e0e0" /><ellipse cx="14" cy="15" rx="5" ry="2.4" fill="#777" /></S>,
  <S w={26} h={26} key="g"><path d="M1 1V14" stroke="#2060e0" /><path d="M1 14L13 8" stroke="#20b040" /><path d="M1 14L12 21" stroke="#e03030" /><Eye cx={17} cy={18} rx={8} /></S>,
  <S w={26} h={26} key="h"><rect x="7" y="0" width="5" height="15" fill="#3c4470" /><path d="M2 19L7 10L9 12L5 25Z" fill="#2a5ac8" /><rect x="6" y="9" width="6" height="6" fill="#fff" stroke="#c07000" strokeWidth="1.5" /><BranchTree x={15} y={8} /></S>,
  <S w={26} h={26} key="i"><ConfirmIcon k={0.78} /></S>,
  <S w={26} h={26} key="j"><path d="M1 14L12 21" stroke="#e03030" /><path d="M1 1V14" stroke="#2060e0" /><path d="M1 14L13 8" stroke="#20b040" /><path d="M18 8V24M10 16H26M15 11L18 8L21 11M15 21L18 24L21 21M13 13L10 16L13 19M23 13L26 16L23 19" stroke="#333" fill="none" /></S>,
];

const ToolCell = ({ w, icon, label, off, on, caret }: { w: number; icon: React.ReactNode; label: string; off?: boolean; on?: boolean; caret?: boolean }) => (
  <Tool $w={w} $off={off} $on={on}>
    <ToolIcon>{icon}</ToolIcon>
    {label}
    {caret && <Caret />}
  </Tool>
);

const RibbonGroup = ({ w, label, pad, shift = 17, children }: { w: number; label: string; pad?: number; shift?: number; children: React.ReactNode }) => (
  <Group $w={w}>
    <GroupBody $pad={pad}>{children}</GroupBody>
    <GroupFooter $shift={shift}>
      {label}
      <FooterCaret />
    </GroupFooter>
  </Group>
);

const treeItems = ["主要", "几何体", "刀具设置和补偿", "进给率和速度", "策略", "非切削移动", "余量、公差和安全距离", "碰撞检查", "程序和机床控制", "选项"];
const menus = ["几何体", "分析", "视图", "选择", "装配", "渲染", "工具", "应用模块", "PMI", "内部"];

const navGlyphs: Record<number, { w: number; el: React.ReactNode }> = {
  1: {
    w: 35,
    el: (
      <g>
        <Dots d="M19 10H9V20" />
        <FolderG x={20} y={3} />
      </g>
    ),
  },
  2: {
    w: 52,
    el: (
      <g>
        <Dots d="M14 10H20M28 10V30" />
        <MinusBox x={6} y={6} />
        <Excl x={27} />
        <FolderG x={36} y={3} />
      </g>
    ),
  },
  3: {
    w: 70,
    el: (
      <g>
        <Dots d="M28 0V20M33 10H39M47 10V20" />
        <MinusBox x={25} y={6} />
        <Excl x={46} />
        <FolderG x={55} y={3} />
      </g>
    ),
  },
  4: {
    w: 89,
    el: (
      <g>
        <Dots d="M28 0V20M47 0V11H57" />
        <Tick x={58} y={4} />
        <path d="M83 2V4M77 10H89" stroke="#222" />
        <path d="M81 4H85V12C85 18 81 18 81 12Z" fill="#d8dcff" stroke="#1a2ab0" />
      </g>
    ),
  },
  5: {
    w: 70,
    el: (
      <g>
        <Dots d="M28 0V10H39" />
        <Tick x={40} y={3} />
        <FolderG x={55} y={3} />
      </g>
    ),
  },
};
const navLabels = ["NC_PROGRAM", "未用项", "PROGRAM", "PROGRAM_1", "DRILLING", "PROGRAM_1_COPY"];

const taskIcons: React.ReactNode[] = [
  <S w={14} h={14} key="w"><path d="M0 2L6 1V6.5H0ZM7 1L14 0V6.5H7Z" fill="#fff" /></S>,
  <S w={22} h={18} key="f"><path d="M1 1H8L10 3H21V18H1Z" fill="#f2c858" /><rect x="2" y="6" width="18" height="12" fill="#f8dc8a" /></S>,
  <S w={22} h={18} key="s"><path d="M7 4A4 4 0 0 1 15 4" fill="none" stroke="#fff" strokeWidth="1.5" /><rect x="1" y="4" width="20" height="14" fill="#fff" /><rect x="6" y="8" width="4" height="4" fill="#e8442a" /><rect x="11" y="8" width="4" height="4" fill="#70b020" /></S>,
  <S w={22} h={18} key="p"><rect x="1" y="0" width="20" height="18" fill="#041a30" stroke="#20a8e0" strokeWidth="1.5" /><text x="4" y="13" fontSize="11" fontWeight="bold" fill="#30b8f0">Ps</text></S>,
  <S w={22} h={18} key="g"><circle cx="11" cy="11" r="10" fill="#8fd06a" stroke="#e8f4e0" /><circle cx="11" cy="13" r="4" fill="#e8f4e0" /></S>,
  <S w={24} h={18} key="k"><rect x="0" y="0" width="24" height="20" rx="4" fill="#1a88f0" /><circle cx="12" cy="11" r="7" fill="none" stroke="#fff" strokeWidth="1.5" /><path d="M10 6V16M15 6L10 11L15 16" stroke="#fff" fill="none" strokeWidth="1.5" /></S>,
  <S w={22} h={18} key="i"><circle cx="11" cy="11" r="9" fill="#f8f8f8" stroke="#28a0e8" strokeWidth="3" /><path d="M4 9H18" stroke="#28a0e8" strokeWidth="2" /><path d="M3 6C10 -2 20 0 21 3" fill="none" stroke="#f0c020" strokeWidth="1.6" /></S>,
  <S w={24} h={18} key="m"><path d="M3 2L21 12L3 20Z" fill="#28b0e8" /><path d="M3 2L12 7L3 12Z" fill="#f09020" /><path d="M11 7L21 12L11 15Z" fill="#60c040" /></S>,
  <S w={22} h={18} key="c"><circle cx="11" cy="12" r="9" fill="#3aa0e0" /><path d="M3 0L14 2L10 12Z" fill="#e04060" /><path d="M14 4L21 12L14 14Z" fill="#f0b020" /></S>,
  <S w={24} h={18} key="n"><rect x="0" y="0" width="24" height="20" rx="4" fill="#c01820" /><path d="M12 3V14M12 3L17 7" stroke="#fff" strokeWidth="2" fill="none" /><circle cx="9.5" cy="14" r="3" fill="#fff" /></S>,
  <S w={24} h={18} key="x"><rect x="0" y="1" width="3" height="17" fill="#10a8a8" /><rect x="3" y="0" width="20" height="18" fill="#7c1010" /><text x="6" y="15" fontSize="9" fontWeight="bold" fill="#fff">NX</text></S>,
  <S w={26} h={18} key="e"><circle cx="10" cy="11" r="9" fill="#50c860" /><circle cx="19" cy="14" r="6" fill="#e8e8e8" /><circle cx="7" cy="8" r="1.2" fill="#14501e" /><circle cx="13" cy="8" r="1.2" fill="#14501e" /></S>,
];
const trayIcons: React.ReactNode[] = [
  <S w={14} h={10} key="0"><rect x="1" y="0" width="9" height="10" fill="#7ab0e8" /><rect x="7" y="4" width="6" height="6" fill="#d0e4f8" /></S>,
  <S w={16} h={10} key="1"><circle cx="8" cy="9" r="7" fill="none" stroke="#f0c020" strokeWidth="3" /><path d="M2 6A7 7 0 0 0 7 16" stroke="#1a80e0" strokeWidth="3" fill="none" /><path d="M13 4A7 7 0 0 1 14 14" stroke="#30b040" strokeWidth="3" fill="none" /></S>,
  <S w={14} h={10} key="2"><circle cx="7" cy="4" r="4" fill="#a07050" /><rect x="2" y="7" width="10" height="4" fill="#c0a080" /></S>,
  <S w={14} h={10} key="3"><circle cx="7" cy="7" r="7" fill="#8fd06a" /><circle cx="7" cy="8" r="3" fill="#fff" /></S>,
  <S w={16} h={10} key="4"><circle cx="6" cy="6" r="6" fill="#50c860" /><circle cx="12" cy="8" r="4" fill="#ddd" /></S>,
  <S w={14} h={10} key="5"><ellipse cx="7" cy="5" rx="4" ry="5" fill="#222" stroke="#ddd" strokeWidth=".6" /><rect x="2" y="6" width="10" height="4" fill="#e0b020" /></S>,
  <S w={14} h={10} key="6"><path d="M1 1L7 0L13 1V6L7 12L1 6Z" fill="#1a88f0" /><circle cx="7" cy="4" r="2.5" fill="#fff" /></S>,
  <S w={14} h={10} key="7"><path d="M2 10L10 0V10Z" fill="#e88070" /><rect x="11" y="3" width="1" height="7" fill="#703030" /></S>,
  <S w={14} h={10} key="8"><rect x="0" y="0" width="14" height="10" fill="#30343a" /><path d="M2 8C4 2 10 2 12 8" stroke="#70b000" fill="none" strokeWidth="2" /></S>,
  <S w={10} h={10} key="9"><rect x="2" y="0" width="6" height="3" fill="none" stroke="#fff" /><rect x="1" y="3" width="8" height="7" fill="#fff" /></S>,
  <S w={14} h={10} key="10"><path d="M1 10A9 9 0 0 1 12 2M5 10A5 5 0 0 1 12 6" fill="none" stroke="#aaa" /></S>,
  <S w={14} h={10} key="11"><path d="M1 5H4L8 1V10M10 3V10M12 1V10" fill="none" stroke="#ddd" /></S>,
  <S w={14} h={10} key="12"><path d="M1 3H13M7 0V10M3 3V8H11V3M1 10H13" fill="none" stroke="#fff" strokeWidth="1.3" /></S>,
  <S w={14} h={10} key="13"><rect x="1" y="1" width="12" height="9" fill="#e84c20" /><path d="M10 3H5V5H9V7H4" stroke="#fff" fill="none" /></S>,
];

const dim = "#5d97ae";
export default function App() {
  const glyphRows = Array.from({ length: 36 });
  return (
    <Root>
      <Global />
      <TitleBar>
        <TopRow>
          <Logo>NX</Logo>
          <Quick>
            <S w={17} h={18}><path d="M1 1H14L16 3V17H1ZM4 1V7H13V1M4 17V10H13V17" fill="none" stroke={dim} /></S>
            <QuickSep />
            <S w={18} h={18}><path d="M16 16C16 8 10 6 3 7M7 2L2 7L7 12" fill="none" stroke={dim} strokeWidth="1.2" /></S>
            <S w={8} h={18}><path d="M1 8H7L4 11Z" fill={dim} /></S>
            <QuickSep />
            <S w={17} h={18}><circle cx="4" cy="14" r="2.5" fill="none" stroke={dim} /><circle cx="14" cy="13" r="2.5" fill="none" stroke={dim} /><path d="M6 12L14 2M12 11L3 3" stroke={dim} /></S>
            <S w={17} h={18}><path d="M1 3H9V14H1ZM6 6H15V17H6Z" fill="none" stroke={dim} /></S>
            <S w={17} h={18}><path d="M2 3H14V17H2ZM5 1H11V5H5Z" fill="none" stroke={dim} /></S>
            <S w={17} h={18}><circle cx="8" cy="9" r="6.5" fill="none" stroke={dim} /><path d="M1 9H15M8 2V16M11 12L16 17" stroke={dim} /></S>
            <QuickSep />
            <S w={16} h={18}><rect x="1" y="2" width="14" height="14" fill="none" stroke="#c8c8c8" /><path d="M1 5H15M5 8V12H10M5 8L4 10M10 12L8 11" stroke="#dfe9ee" fill="none" /></S>
            <S w={8} h={18}><path d="M1 8H7L4 11Z" fill="#fff" /></S>
            <QuickSep />
            <S w={18} h={18}><path d="M2 9L12 3L16 7L6 14Z" fill="#fff" stroke="#123" /><path d="M5 9L8 7L12 10" stroke="#123" fill="none" /></S>
            <QuickSep />
            <S w={16} h={18}><path d="M1 2H11V6M5 6H15V16H5V6M1 2V12H5" fill="none" stroke={dim} /></S>
            <S w={16} h={18}><path d="M.5 2.5H15.5V16.5H.5Z" fill="none" stroke="#fff" /><path d="M1 4.5H15" stroke="#fff" strokeWidth="2" /></S>
            <QuickText>窗口</QuickText>
            <S w={8} h={18}><path d="M1 8H7L4 11Z" fill="#fff" /></S>
            <S w={8} h={18}><path d="M1 5H7M1 8H7L4 11Z" fill="#fff" stroke="#fff" strokeWidth=".5" /></S>
          </Quick>
          <DocTitle>NX - 加工</DocTitle>
          <Brand>SIEMENS</Brand>
          <WinBtns>
            <S w={10} h={14}><path d="M1 13H9" stroke="#fff" strokeWidth="2" /></S>
            <S w={13} h={12}><path d="M3 3V1H12V8H10M1 3.5H10V11H1Z" fill="none" stroke="#fff" strokeWidth="1.2" /></S>
          </WinBtns>
        </TopRow>
        <MenuRow>
          <MenuItem $gap={9}>文件(F)</MenuItem>
          <MenuItem $active>主页</MenuItem>
          {menus.map((m) => (
            <MenuItem key={m}>{m}</MenuItem>
          ))}
          <SearchBox>
            查找命令
            <S w={18} h={18}><circle cx="11" cy="6.5" r="5.5" fill="#fff" stroke="#333" /><path d="M7 11L2 17" stroke="#333" strokeWidth="1.6" /></S>
          </SearchBox>
          <MenuTools>
            <S w={16} h={16}><path d="M1 5V1H5M11 1H15V5M15 11V15H11M5 15H1V11" fill="none" stroke="#fff" /></S>
            <S w={16} h={16}><path d="M1 12L8 5L15 12" fill="none" stroke="#fff" /></S>
            <S w={16} h={16}><circle cx="8" cy="8" r="7" fill="none" stroke="#fff" /><path d="M5.5 6C5.5 3 10.5 3 10.5 6C10.5 8 8 8 8 10M8 11.5V13" fill="none" stroke="#fff" /></S>
            <SmallRow>
              <S w={16} h={12}><path d="M0 3L8 0L16 3L8 6Z" fill="#111" /><path d="M4 5V9L8 11L12 9V5L8 7Z" fill="#ddd" /><path d="M15 3V9" stroke="#2b6ff0" strokeWidth="1.5" /></S>
              教程
            </SmallRow>
          </MenuTools>
        </MenuRow>
      </TitleBar>

      <Ribbon>
        <RibbonGroup w={217} label="插入" pad={6}>
          <ToolCell w={58} off icon={<CreateTool />} label="创建刀具" />
          <ToolCell w={58} off icon={<CreateGeom />} label="创建几何体" />
          <ToolCell w={59} off icon={<CreateOp />} label="创建工序" />
          <IconCol $w={28}>
            <SmallPaper />
            <SmallCrown />
          </IconCol>
        </RibbonGroup>
        <RibbonGroup w={55} label="操作">
          <ToolCell w={58} off icon={<PropsIcon />} label="属性" caret />
        </RibbonGroup>
        <RibbonGroup w={311} label="工序" pad={9} shift={0}>
          <ToolCell w={52} icon={<GenPath />} label="生成刀轨" />
          <ToolCell w={52} off icon={<Overcut />} label="过切检查" />
          <ToolCell w={56} icon={<S><ConfirmIcon /></S>} label="确认刀轨" />
          <ToolCell w={48} off icon={<MachineSim />} label="机床仿真" />
          <ToolCell w={46} off icon={<PostProc />} label="后处理" />
          <ToolCell w={48} icon={<MoreOp />} label="更多" caret />
        </RibbonGroup>
        <RibbonGroup w={303} label="显示" pad={10}>
          <ToolCell w={50} on icon={<ShowPath />} label="显示刀轨" />
          <Tool $w={2} />
          <ToolCell w={51} on icon={<SelectPath />} label="选择刀轨" />
          <ToolCell w={52} off icon={<PathReport />} label="刀轨报告" />
          <IconCol $w={54}>
            <SmallRow $left={-14}>
              <SelectedMini><ShowCut /></SelectedMini>
            </SmallRow>
            <SmallRow $left={2} $gap={9}>
              <DrillSmall />
              <Caret $mt={0} />
            </SmallRow>
          </IconCol>
          <IconCol $w={40}>
            <ArrowBlock up />
            <Layers />
            <ArrowBlock up={false} />
          </IconCol>
          <ToolCell w={42} icon={<MorePie />} label="更多" caret />
        </RibbonGroup>
        <RibbonGroup w={256} label="刀轨动画">
          <CircleCol $w={48}>
            <Round kind="back" />
            <CircleWrap><Round kind="prev" /><Caret $mt={0} /></CircleWrap>
          </CircleCol>
          <CircleCol $w={56}>
            <Round kind="pause" />
            <CircleWrap><Round kind="next" /><Caret $mt={0} /></CircleWrap>
          </CircleCol>
          <ToolCell w={42} icon={<Round kind="play" size={33} />} label="播放" />
          <SliderBox>
            <SliderTrack><SliderThumb /></SliderTrack>
            <SliderLabel>速度</SliderLabel>
          </SliderBox>
        </RibbonGroup>
        <RibbonGroup w={125} label="IPW" pad={8}>
          <ToolCell w={56} icon={<ShowIPW />} label="显示 IPW" />
          <ToolCell w={52} off icon={<AnalyzeIPW />} label="分析 IPW" caret />
        </RibbonGroup>
        <RibbonGroup w={150} label="加工工具 - GC工具箱" shift={0}>
          <ToolsGrid>
            <GridRow>
              <Tiny n={0} /><Tiny n={1} /><Tiny n={2} /><Tiny n={3} /><ThinSep /><Tiny n={4} />
            </GridRow>
            <GridRow>
              <Tiny n={5} /><Tiny n={6} /><ThinSep /><Tiny n={7} /><Tiny n={8} /><Tiny n={9} /><Tiny n={10} />
            </GridRow>
          </ToolsGrid>
        </RibbonGroup>
        <RibbonGroup w={185} label="特征" pad={8}>
          <ToolCell w={52} off icon={<FindFeature />} label="查找特征" />
          <ToolCell w={74} off icon={<CreateFeature />} label="创建特征工艺" />
          <ToolCell w={50} icon={<MoreFeature />} label="更多" caret />
        </RibbonGroup>
      </Ribbon>

      <Main>
        <LeftArea>
          <TabRow>
            <HomeTab>
              <S w={14} h={16}><path d="M1 8L7 1L13 8M3 7V15H6V10H9V15H12V7" fill="none" stroke="#333" /></S>
              欢迎页面
            </HomeTab>
            <ActiveTab>
              <S w={18} h={16}><path d="M6 1H1V5H6V9H1V13" fill="none" stroke="#fff" /><Refresh cx={12} cy={11} r={4} c="#fff" /></S>
              _model3.prt
              <S w={11} h={12}><path d="M1 1H7L10 4V11H1ZM4 7H10" fill="#fff" stroke={BLUE} /></S>
              <S w={9} h={9}><path d="M1 1L8 8M8 1L1 8" stroke="#dce8ee" strokeWidth="1.8" /></S>
            </ActiveTab>
          </TabRow>
          <Work>
            <DialogCol>
              <Dialog>
                <DialogTitle>
                  <GearIcon />
                  钻孔 - [DRILLING]
                  <TitleActions>
                    ?
                    <S w={12} h={12}><path d="M1 1L11 11M11 1L1 11" stroke="#fff" strokeWidth="1.8" /></S>
                  </TitleActions>
                </DialogTitle>
                <FindRow>
                  <Binoculars />
                  <FindLabel>查找</FindLabel>
                  <FindInput />
                </FindRow>
                <Columns>
                  <TreePanel>
                    {Array.from({ length: 23 }).map((_, i) => (
                      <TreeRow key={i} $alt={i % 2 === 1}>
                        <TreeLabel $sel={i === 0}>{treeItems[i] ?? ""}</TreeLabel>
                      </TreeRow>
                    ))}
                    <TreeLines width="22" height="200">
                      <Dots d="M9.5 9V189M10 9H18M10 29H18M10 49H18M10 69H18M10 89H18M14 109H18M10 129H18M10 149H18M10 169H18M10 189H18" />
                      <rect x="6.5" y="105.5" width="7" height="7" fill="#fff" stroke="#ccc" />
                      <path d="M8 109H12M10 107V111" stroke="#111" />
                    </TreeLines>
                  </TreePanel>
                  <FormPanel>
                    <FormSection>
                      <SectionHead>
                        <DownTri />
                        主要
                      </SectionHead>
                      <FormRow>
                        <FieldLabel>刀具</FieldLabel>
                        <Controls>
                          <Combo $w={117}>ZT10.3 (钻刀)<ComboCaret /></Combo>
                          <IconBtn><BtnCreate /></IconBtn>
                          <IconBtn><BtnWrenchTorch /></IconBtn>
                        </Controls>
                      </FormRow>
                      <FormRow>
                        <FieldLabel $drop={6}>指定特征几何体</FieldLabel>
                        <Controls>
                          <IconBtn><BtnFeature /></IconBtn>
                          <IconBtn><BtnTorch /></IconBtn>
                        </Controls>
                      </FormRow>
                      <FormRow>
                        <FieldLabel>运动输出</FieldLabel>
                        <Controls>
                          <Combo $w={141}>机床加工周期<ComboCaret /></Combo>
                        </Controls>
                      </FormRow>
                      <FormRow>
                        <FieldLabel>循环</FieldLabel>
                        <Controls>
                          <Combo $w={141}>钻<ComboCaret /></Combo>
                          <IconBtn><Wrench /></IconBtn>
                        </Controls>
                      </FormRow>
                    </FormSection>
                  </FormPanel>
                </Columns>
                <OpsPanel>
                  <OpsHead>
                    <DownTri />
                    操作
                  </OpsHead>
                  <OpsButtons>
                    <IconBtn><S w={28} h={28}><Path5 x={5} y={2} k={0.75} c="#333" /><Refresh cx={19} cy={20} r={6} /></S></IconBtn>
                    <IconBtn><OpVerify /></IconBtn>
                    <IconBtn><S w={28} h={28}><g transform="translate(0 1)"><ConfirmIcon k={0.86} /></g></S></IconBtn>
                    <IconBtn><OpPost /></IconBtn>
                    <YellowBtn><S w={26} h={28}><Path5 x={4} y={2} k={0.78} c="#111" /><Target cx={19} cy={9} r={4} /></S></YellowBtn>
                  </OpsButtons>
                </OpsPanel>
                <CollapseBar><UpTri /></CollapseBar>
                <DialogFooter>
                  <DlgButton $primary>确定</DlgButton>
                  <DlgButton>取消</DlgButton>
                </DialogFooter>
              </Dialog>
              <TriadBox width="586" height="160" viewBox="1 826 586 160">
                <rect x="105" y="826" width="4" height="31" fill="#0a3ff0" />
                <rect x="86" y="857" width="43" height="43" fill="#fff" stroke="#c8c8c8" />
                <circle cx="107" cy="879" r="5" fill="#1e7a22" />
                <path d="M34 879L52 874V877H86V882H52V885Z" fill="#d62a2a" />
                <text x="21" y="884" fontSize="12" fill="#d85050">X</text>
              </TriadBox>
            </DialogCol>
            <Viewport viewBox="587 176 690 812" width="690" height="814">
              <defs>
                <linearGradient id="drillG" x1="0" x2="1" y1="0" y2="0">
                  <stop offset="0" stopColor="#ef9200" />
                  <stop offset="0.4" stopColor="#ffb408" />
                  <stop offset="0.75" stopColor="#f59400" />
                  <stop offset="1" stopColor="#b06a00" />
                </linearGradient>
              </defs>
              <rect x="634" y="289" width="307" height="633" fill="#e6fbab" stroke="#d9dfb0" />
              <path d="M720 289V222H787" fill="none" stroke="#b4b8f6" strokeWidth="1.3" />
              <path d="M640 289H787" stroke="#b4b8f6" strokeWidth="1" />
              <path d="M792 289H852L849 294H795Z" fill="#a8760c" />
              <rect x="794" y="294" width="54" height="121" fill="url(#drillG)" />
              <path d="M794 415H848L821 431Z" fill="url(#drillG)" />
              <path d="M794 415H848" stroke="#8a6224" strokeWidth="1" />
              <path d="M821 181V271" stroke="#0a1fe8" strokeWidth="3" strokeDasharray="10 5" />
              <path d="M821 271V431" stroke="#f6cbd8" strokeWidth="3.5" />
              <path d="M821 280V605" stroke="#22eef0" strokeWidth="2.5" strokeDasharray="9 6" />
              <path d="M787 176V289" stroke="#0b3ed8" strokeWidth="2" />
              <path d="M787 190L783.5 206H790.5Z" fill="#1666e8" />
              <path d="M787 246L781 263H793Z" fill="#ef1c1c" />
              <path d="M720 289H787" stroke="#6c2ad0" strokeWidth="2" />
              <path d="M684 289L703 284V287H720V291H703V294Z" fill="#c93030" />
              <path d="M749 289L762 286V292Z" fill="#e81616" />
              <path d="M655 289L670 285V293Z" fill="#0a14f0" />
              <rect x="784" y="286" width="6" height="6" fill="#0a1fa8" />
              <g fontSize="13">
                <text x="792" y="184" fill="#5a74ea">ZM</text>
                <text x="792" y="242" fill="#e83a3a">Z</text>
                <text x="682" y="285" fill="#d23a3a">XM</text>
                <text x="741" y="285" fill="#e03a3a">X</text>
                <text x="643" y="294" fill="#1a28e8">X</text>
                <text x="788" y="289" fill="#4aa060">YM</text>
              </g>
            </Viewport>
          </Work>
        </LeftArea>

        <ToolColumn>
          {ColIcons.map((ic, i) => (
            <ColItem key={i}>{ic}</ColItem>
          ))}
          <ColSep />
          <ColItem>
            <S w={26} h={24}><path d="M1 14L9 2L16 4L24 14L20 20H4Z" fill="#e4e4e4" stroke="#ccc" /><ellipse cx="14" cy="15" rx="5" ry="2.4" fill="#f4f4f4" stroke="#ccc" /></S>
          </ColItem>
          <ColSep />
          <ColCaret />
        </ToolColumn>

        <Navigator>
          <NavHead>
            <NavWinIcon />
            工序导航器 - 程序顺序
          </NavHead>
          <TableBox>
            <HeaderRow>
              <HeaderCell>名称</HeaderCell>
              <HeaderCell>换刀</HeaderCell>
              <HeaderCell>刀</HeaderCell>
            </HeaderRow>
            <Rows>
              {glyphRows.map((_, i) => {
                const g = navGlyphs[i];
                const sel = i === 4;
                return (
                  <NavRow key={i} $alt={i % 2 === 1}>
                    <NameCell>
                      {g && <Glyphs width={g.w} height={19} viewBox={`0 0 ${g.w} 19`}>{g.el}</Glyphs>}
                      {i < 6 && <NameText $sel={sel}>{navLabels[i]}</NameText>}
                    </NameCell>
                    <DataCell $sel={sel} $line>
                      {sel && (
                        <S w={9} h={14}>
                          <rect x=".5" y=".5" width="8" height="13" fill="#d8d8ee" stroke="#20207a" />
                          <path d="M1 10L8 5M1 5L8 1" stroke="#20207a" strokeWidth="1.4" />
                        </S>
                      )}
                    </DataCell>
                    <DataCell $sel={sel}>
                      {sel && <S w={10} h={10}><path d="M0 4L3.5 9L9 1" fill="none" stroke="#2fd24e" strokeWidth="2.2" /></S>}
                    </DataCell>
                  </NavRow>
                );
              })}
            </Rows>
            <ScrollBar>
              <S w={9} h={11}><path d="M7 1L2 5.5L7 10" fill="none" stroke="#555" strokeWidth="2" /></S>
              <ScrollThumb />
              <S w={9} h={11}><path d="M2 1L7 5.5L2 10" fill="none" stroke="#555" strokeWidth="2" /></S>
            </ScrollBar>
          </TableBox>
          <NavSplit />
          <FoldRow><RightTri />相关性</FoldRow>
          <FoldRow><RightTri />细节</FoldRow>
        </Navigator>

        <Rail>
          <RailGroup $h={124} $grey viewBox="0 0 12 124">
            <path d="M0 0V124" stroke="#a5a5a5" strokeWidth="2" />
            <path d="M4 12H12" stroke="#333" />
            <path d="M5 58L12 53V73L5 69Z" fill="#eee" stroke="#444" />
            <path d="M4 106L12 94V115H8Z" fill="#aaa" stroke="#444" />
          </RailGroup>
          <RailGroup $h={45} $grey={false} viewBox="0 0 12 45">
            <path d="M5 11H12V21H5Z" fill="#4a7ad8" stroke="#1a3aa0" />
            <path d="M5 21V34M5 28H12" stroke="#1a2ab0" />
          </RailGroup>
          <RailGroup $h={669} $grey viewBox="0 0 12 669">
            <path d="M0 0V669" stroke="#a5a5a5" strokeWidth="2" />
            <path d="M3 17L12 11V29H3Z" fill="#f0e0d0" stroke="#a090d0" />
            <rect x="4" y="58" width="8" height="15" fill="#ddd" stroke="#333" />
            <path d="M9 57L12 51V60Z" fill="#f08a1c" />
            <path d="M6 93V116M4 97H9V102H4ZM4 105H9V110H4Z" fill="#0a1ad0" stroke="#0a1ad0" />
            <rect x="3" y="146" width="9" height="23" fill="#eee" stroke="#333" />
            <circle cx="10" cy="158" r="6" fill="#3a8aa0" />
            <circle cx="13" cy="211" r="11" fill="none" stroke="#333" />
            <path d="M9 211H12" stroke="#333" />
            <path d="M1 250L6 238L12 233V271H1Z" fill="#ffcc10" />
            <path d="M8 246H12V262H8Z" fill="#e01010" />
            <rect x="3" y="289" width="9" height="17" fill="#ddd" stroke="#111" strokeWidth="1.5" />
          </RailGroup>
        </Rail>
      </Main>

      <StatusBar>指定参数或选择路径</StatusBar>
      <Taskbar>
        {taskIcons.map((ic, i) => (
          <TaskItem key={i} $bg={i === 4 ? "#97561f" : i === 10 ? "#383d45" : undefined}>
            {ic}
          </TaskItem>
        ))}
        <Temp>15℃</Temp>
        {trayIcons.map((ic, i) => (
          <TrayIcon key={i}>{ic}</TrayIcon>
        ))}
        <Clock>20:33</Clock>
        <NotifyIcon>
          <S w={14} h={10}><path d="M0 0H14V10H0Z" fill="#fff" /><path d="M2 3H12M2 6H12" stroke="#222" /></S>
        </NotifyIcon>
      </Taskbar>

      <Watermark width="74" height="84" viewBox="0 0 74 84">
        <path d="M37 1L73 21V62L37 83L1 62V21Z" fill="#8ed6f8" opacity=".72" />
        <path d="M37 1L60 14L38 26L16 32L1 21Z" fill="#d4effc" opacity=".8" />
        <path d="M37 83L1 62V30L12 50L37 66L58 60Z" fill="#76c8f2" opacity=".8" />
        <path d="M1 30C14 18 36 16 52 26M72 32C72 52 58 66 36 66M36 83C18 70 12 54 14 36" fill="none" stroke="#fff" strokeWidth="1.2" opacity=".9" />
        <path d="M37 24L56 35V56L37 67L18 56V35Z" fill="#fff" opacity=".85" />
        <path d="M37 32L50 39V53L37 60L24 53V39Z" fill="#b0e2fa" />
        <path d="M37 46L50 39V53L37 60Z" fill="#7cc8f0" />
        <path d="M37 32L50 39L37 46L24 39Z" fill="#d6f0fc" />
        <path d="M37 75L49 82H25Z" fill="#1e7ea8" />
      </Watermark>
    </Root>
  );
}
